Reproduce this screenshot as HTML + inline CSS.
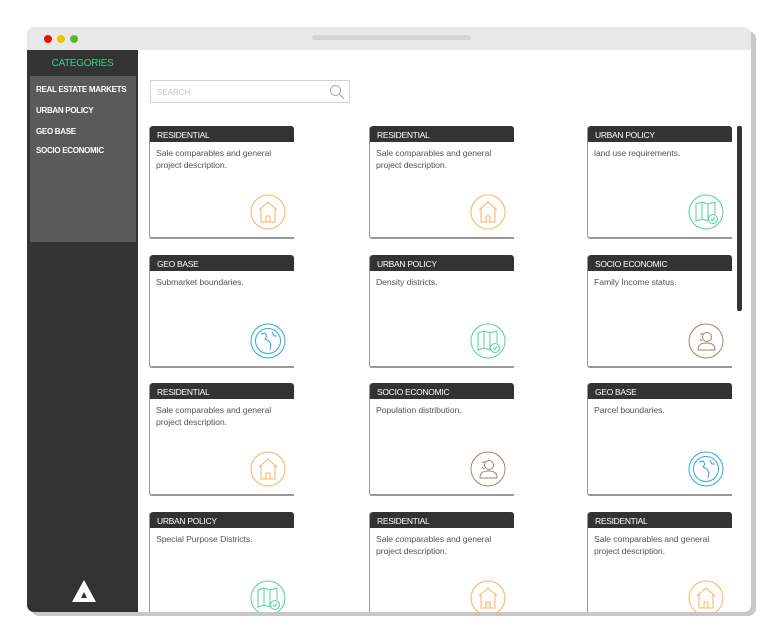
<!DOCTYPE html>
<html><head><meta charset="utf-8"><style>
*{margin:0;padding:0;box-sizing:border-box}
body{width:780px;height:638px;background:#fff;position:relative;overflow:hidden;font-family:"Liberation Sans",sans-serif}
.shadow{position:absolute;left:31px;top:31px;width:725px;height:585px;background:#c8c8c8;border-radius:8px}
.win{position:absolute;left:27px;top:27px;width:724px;height:585px;background:#fff;border-radius:7px;overflow:hidden}
.bar{position:absolute;left:0;top:0;width:100%;height:23px;background:#e9e9e9}
.dot{position:absolute;top:8px;width:8px;height:8px;border-radius:50%}
.url{position:absolute;left:285px;top:8px;width:159px;height:5px;border-radius:3px;background:#d4d4d4}
.side{position:absolute;left:0;top:23px;width:111px;height:562px;background:#333}
.cat{position:absolute;left:0;top:8px;width:111px;text-align:center;color:#3fcf8e;font-size:10px;letter-spacing:-0.3px}
.panel{position:absolute;left:3px;top:26px;width:106px;height:166px;background:#5a5a5a}
.panel div{color:#fff;font-size:8px;font-weight:bold;margin-left:6px;letter-spacing:-0.3px;position:absolute}
.logo{position:absolute;left:45px;top:530px}
.search{position:absolute;left:123px;top:53px;width:200px;height:23px;border:1px solid #d4d4d4;font-size:8px;color:#c4c4c4;padding:7px 6px}
.card{position:absolute;width:145px;height:113px;border-left:1px solid #999;border-bottom:2px solid #999;border-radius:3px 3px 0 3px}
.card .h{height:16px;background:#333;color:#fff;font-size:8.5px;padding:4px 7px;border-radius:3px 3px 0 0;letter-spacing:-0.3px}
.card .t{font-size:8.7px;color:#555;padding:5px 6px;line-height:12px;letter-spacing:-0.1px}
.card svg{position:absolute;left:100px;top:68px}
.scroll{position:absolute;left:710px;top:99px;width:5px;height:185px;background:#333;border-radius:2px}
</style></head><body>
<div class="shadow"></div>
<div class="win">
<div class="bar"><div class="dot" style="left:17px;background:#e6120e"></div><div class="dot" style="left:30px;background:#e6c700"></div><div class="dot" style="left:43px;background:#5cb82e"></div><div class="url"></div></div>
<div class="side">
<div class="cat">CATEGORIES</div>
<div class="panel">
<div style="top:9px">REAL ESTATE MARKETS</div>
<div style="top:30px">URBAN POLICY</div>
<div style="top:51px">GEO BASE</div>
<div style="top:70px">SOCIO ECONOMIC</div>
</div>
<svg class="logo" width="24" height="22" viewBox="0 0 24 22"><path d="M12 0 L24 22 H0 Z" fill="#fff"/><path d="M12 12 L15 18 H9 Z" fill="#333"/></svg>
</div>
<div class="search">SEARCH<svg style="position:absolute;right:4px;top:3px" width="16" height="16" viewBox="0 0 16 16"><circle cx="6.5" cy="6.5" r="5" fill="none" stroke="#aaa" stroke-width="1"/><path d="M10 10 L15 15" stroke="#aaa"/></svg></div>
<div class="scroll"></div>
<div id="cards"></div>
</div>
<script>
var house='<svg width="36" height="36" viewBox="0 0 36 36"><circle cx="18" cy="18" r="17" fill="none" stroke="#f7b35a" stroke-width="1"/><path d="M9 16 L18 8 L27 16 M11 14 V28 H25 V14 M16 28 V22 H20 V28" fill="none" stroke="#f7b35a" stroke-width="1"/></svg>';
var map='<svg width="36" height="36" viewBox="0 0 36 36"><circle cx="18" cy="18" r="17" fill="none" stroke="#4fd39a" stroke-width="1"/><path d="M8 10 L14 8 L20 10 L27 8 V20 M8 10 V27 L14 25 L20 27 M14 8 V25 M20 10 V27" fill="none" stroke="#4fd39a" stroke-width="1"/><circle cx="25" cy="25" r="4.5" fill="#fff" stroke="#4fd39a"/><path d="M23 25 L24.5 26.5 L27 23.5" fill="none" stroke="#4fd39a"/></svg>';
var globe='<svg width="36" height="36" viewBox="0 0 36 36"><circle cx="18" cy="18" r="17" fill="none" stroke="#2aa9e0" stroke-width="1"/><circle cx="18" cy="18" r="12.5" fill="none" stroke="#2aa9e0" stroke-width="1"/><path d="M11 11 L15 10 L17 13 L15 16 L19 18 L21 22 L20 27 M22 9 L24 13 L27 13" fill="none" stroke="#2aa9e0" stroke-width="1"/></svg>';
var person='<svg width="36" height="36" viewBox="0 0 36 36"><circle cx="18" cy="18" r="17" fill="none" stroke="#a08468" stroke-width="1"/><circle cx="19" cy="14" r="4.5" fill="none" stroke="#a08468"/><path d="M10 27 C10 21 14 20 19 20 C24 20 27 22 27 27 Z M12 12 L15 10 M12 16 L14 18" fill="none" stroke="#a08468"/></svg>';
var S='Sale comparables and general<br>project description.';
var data=[
['RESIDENTIAL',S,house],['RESIDENTIAL',S,house],['URBAN POLICY','land use requirements.',map],
['GEO BASE','Submarket boundaries.',globe],['URBAN POLICY','Density districts.',map],['SOCIO ECONOMIC','Family Income status.',person],
['RESIDENTIAL',S,house],['SOCIO ECONOMIC','Population distribution.',person],['GEO BASE','Parcel boundaries.',globe],
['URBAN POLICY','Special Purpose Districts.',map],['RESIDENTIAL',S,house],['RESIDENTIAL',S,house]];
var xs=[122,342,560],ys=[99,228,356,485],h='';
data.forEach(function(d,i){h+='<div class="card" style="left:'+xs[i%3]+'px;top:'+ys[Math.floor(i/3)]+'px"><div class="h">'+d[0]+'</div><div class="t">'+d[1]+'</div>'+d[2]+'</div>';});
document.getElementById('cards').innerHTML=h;
</script>
</body></html>
